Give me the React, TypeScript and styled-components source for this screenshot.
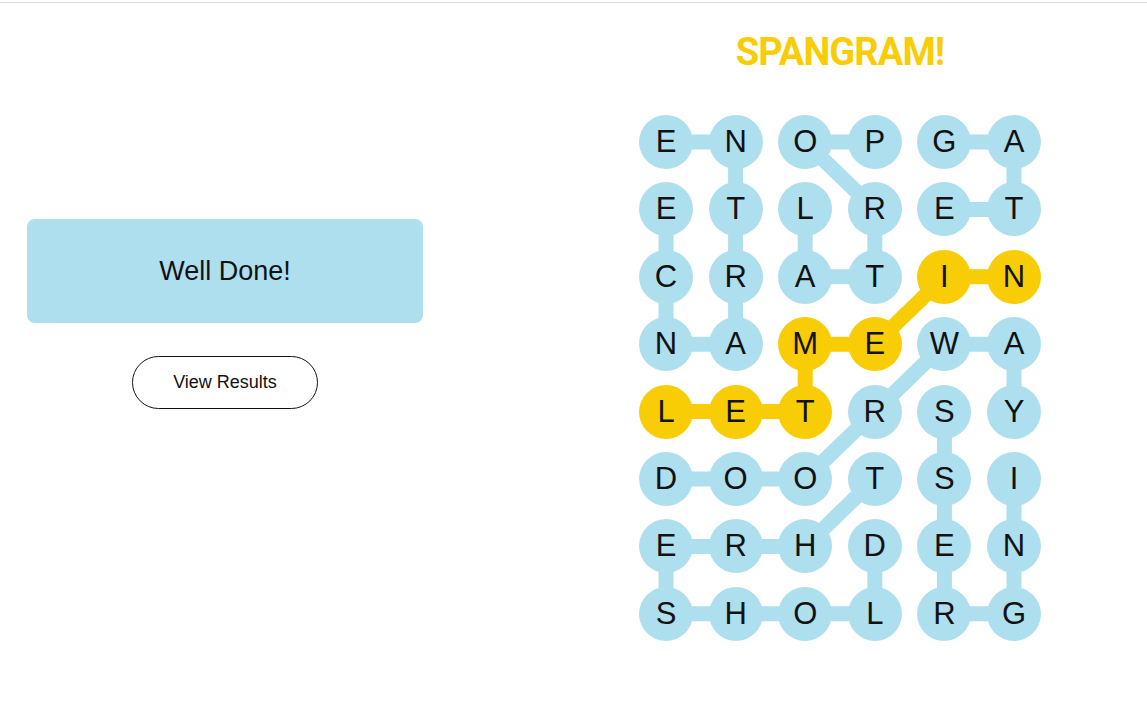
import React from 'react';
import styled, { createGlobalStyle } from 'styled-components';

const GlobalStyle = createGlobalStyle`
  html, body {
    margin: 0;
    padding: 0;
    background: #ffffff;
    font-family: "Liberation Sans", Arial, sans-serif;
    color: #121212;
  }
`;

const BLUE = '#aedfee';
const YELLOW = '#f8cd05';
const CELL = 54;
const COL_GAP = 15.6;
const ROW_GAP = 13.4;

const LETTERS = [
  'ENOPGA',
  'ETLRET',
  'CRATIN',
  'NAMEWA',
  'LETRSY',
  'DOOTSI',
  'ERHDEN',
  'SHOLRG',
];

type Cell = [number, number];

const WORDS: { path: Cell[]; spangram?: boolean }[] = [
  { path: [[0, 0], [0, 1], [1, 1], [2, 1], [3, 1], [3, 0], [2, 0], [1, 0]] },
  { path: [[0, 3], [0, 2], [1, 3], [2, 3], [2, 2], [1, 2]] },
  { path: [[0, 4], [0, 5], [1, 5], [1, 4]] },
  { path: [[5, 0], [5, 1], [5, 2], [4, 3], [3, 4], [3, 5], [4, 5]] },
  { path: [[5, 5], [6, 5], [7, 5], [7, 4], [6, 4], [5, 4], [4, 4]] },
  { path: [[5, 3], [6, 2], [6, 1], [6, 0], [7, 0], [7, 1], [7, 2], [7, 3], [6, 3]] },
  { path: [[4, 0], [4, 1], [4, 2], [3, 2], [3, 3], [2, 4], [2, 5]], spangram: true },
];

const spangramCells = new Set(
  WORDS.filter(w => w.spangram).flatMap(w => w.path.map(([r, c]) => `${r}-${c}`))
);

const cx = (c: number) => c * (CELL + COL_GAP) + CELL / 2;
const cy = (r: number) => r * (CELL + ROW_GAP) + CELL / 2;

const BOARD_W = 6 * CELL + 5 * COL_GAP;
const BOARD_H = 8 * CELL + 7 * ROW_GAP;

const TopBar = styled.header`
  height: 2px;
  border-bottom: 1px solid #dcdcdc;
`;

const Main = styled.main`
  display: flex;
  align-items: flex-start;
`;

const LeftPanel = styled.section`
  width: 396px;
  padding: 216px 27px 0;
  display: flex;
  flex-direction: column;
  align-items: center;
  gap: 33px;
`;

const Banner = styled.div`
  width: 100%;
  height: 104px;
  border-radius: 8px;
  background: ${BLUE};
  display: flex;
  align-items: center;
  justify-content: center;
  font-size: 27px;
  color: #121212;
`;

const ResultsButton = styled.button`
  width: 186px;
  height: 53px;
  border: 1px solid #121212;
  border-radius: 27px;
  background: #ffffff;
  font-family: "Liberation Sans", Arial, sans-serif;
  font-size: 18px;
  color: #121212;
  cursor: pointer;
`;

const RightPanel = styled.section`
  margin-left: 83px;
  width: 614px;
  display: flex;
  flex-direction: column;
  align-items: center;
`;

const Title = styled.h1`
  margin: 27px 0 0;
  height: 44px;
  line-height: 44px;
  font-family: Roboto, "Liberation Sans", sans-serif;
  font-weight: 700;
  font-size: 38px;
  letter-spacing: -0.9px;
  color: ${YELLOW};
`;

const Board = styled.div`
  position: relative;
  margin-top: 41px;
  width: ${BOARD_W}px;
  height: ${BOARD_H}px;
`;

const Links = styled.svg`
  position: absolute;
  inset: 0;
`;

const Grid = styled.div`
  position: relative;
  display: grid;
  grid-template-columns: repeat(6, ${CELL}px);
  grid-auto-rows: ${CELL}px;
  column-gap: ${COL_GAP}px;
  row-gap: ${ROW_GAP}px;
`;

const Letter = styled.button<{ $found: 'blue' | 'yellow' }>`
  width: ${CELL}px;
  height: ${CELL}px;
  padding: 0;
  border: none;
  border-radius: 50%;
  background: ${p => (p.$found === 'yellow' ? YELLOW : BLUE)};
  display: flex;
  align-items: center;
  justify-content: center;
  font-family: "Liberation Sans", Arial, sans-serif;
  font-size: 31px;
  color: #121212;
`;

const App: React.FC = () => {
  return (
    <>
      <GlobalStyle />
      <TopBar />
      <Main>
        <LeftPanel>
          <Banner>Well Done!</Banner>
          <ResultsButton>View Results</ResultsButton>
        </LeftPanel>
        <RightPanel>
          <Title>SPANGRAM!</Title>
          <Board>
            <Links width={BOARD_W} height={BOARD_H} viewBox={`0 0 ${BOARD_W} ${BOARD_H}`}>
              {WORDS.map((w, i) => (
                <polyline
                  key={i}
                  points={w.path.map(([r, c]) => `${cx(c)},${cy(r)}`).join(' ')}
                  fill="none"
                  stroke={w.spangram ? YELLOW : BLUE}
                  strokeWidth={15}
                  strokeLinejoin="round"
                />
              ))}
            </Links>
            <Grid>
              {LETTERS.map((row, r) =>
                row.split('').map((ch, c) => (
                  <Letter key={`${r}-${c}`} $found={spangramCells.has(`${r}-${c}`) ? 'yellow' : 'blue'}>
                    {ch}
                  </Letter>
                ))
              )}
            </Grid>
          </Board>
        </RightPanel>
      </Main>
    </>
  );
};

export default App;
